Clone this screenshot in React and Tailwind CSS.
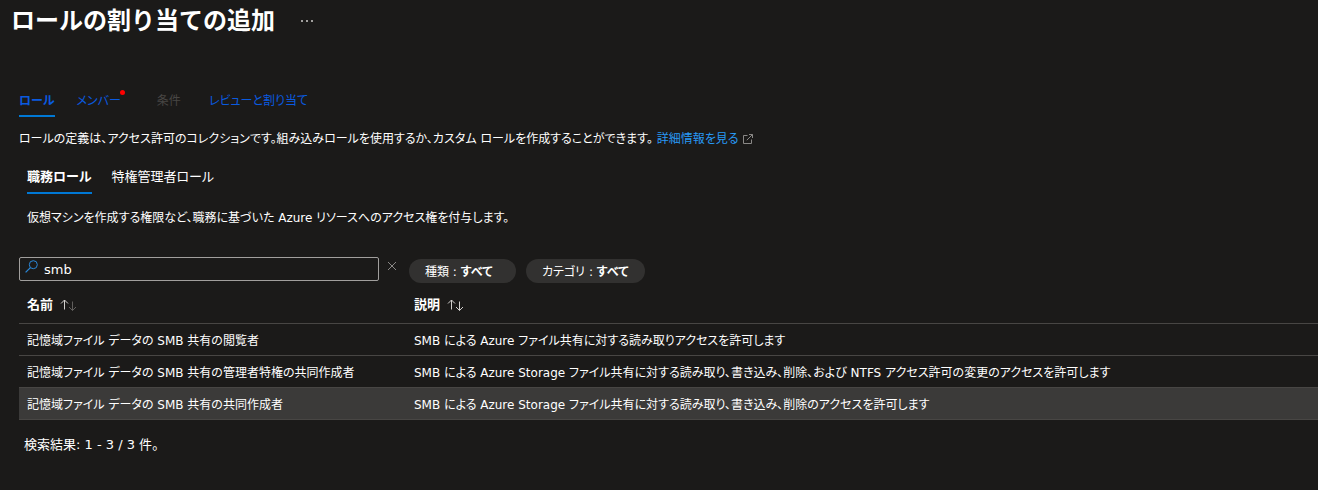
import React, { useState } from 'react';
import { clsx } from 'clsx';

const steps = [
  { label: 'ロール', active: true, className: 'mr-[22px]' },
  { label: 'メンバー', badge: true, className: 'mr-9' },
  { label: '条件', disabled: true, className: 'mr-7' },
  { label: 'レビューと割り当て' },
];

const filters = [
  { label: '種類', value: 'すべて', className: 'min-w-[107px]' },
  { label: 'カテゴリ', value: 'すべて', className: 'min-w-[119px]' },
];

const roles = [
  {
    name: '記憶域ファイル データの SMB 共有の閲覧者',
    description: 'SMB による Azure ファイル共有に対する読み取りアクセスを許可します',
  },
  {
    name: '記憶域ファイル データの SMB 共有の管理者特権の共同作成者',
    description:
      'SMB による Azure Storage ファイル共有に対する読み取り、書き込み、削除、および NTFS アクセス許可の変更のアクセスを許可します',
  },
  {
    name: '記憶域ファイル データの SMB 共有の共同作成者',
    description: 'SMB による Azure Storage ファイル共有に対する読み取り、書き込み、削除のアクセスを許可します',
    selected: true,
  },
];

const SearchIcon = () => (
  <svg className="w-[13px] h-[13px] shrink-0 mb-1.5" viewBox="0 0 13 13" fill="none" stroke="#2b88d8" aria-hidden="true">
    <circle cx="8.3" cy="4.7" r="4" />
    <path d="M5.4 7.6 L0.6 12.4" strokeWidth="1.3" />
  </svg>
);

const ExternalIcon = () => (
  <svg className="w-[10px] h-[10px]" viewBox="0 0 10 10" fill="none" stroke="#8a8886" aria-hidden="true">
    <path d="M4.5 1.5 H0.5 V9.5 H8.5 V5.5" />
    <path d="M6 0.5 H9.5 V4 M9.5 0.5 L3.8 6.2" />
  </svg>
);

const SortIcon = ({ sorted }) => (
  <svg className="w-4 h-3" viewBox="0 0 16 12" fill="none" aria-hidden="true">
    <path d="M4.5 10.5 V1 M1 4.5 L4.5 1 L8 4.5" stroke="#d2d0ce" />
    <path d="M12.5 2.5 V11.5 M9 8 L12.5 11.5 L16 8" stroke={sorted ? '#605e5c' : '#d2d0ce'} />
  </svg>
);

const StepTab = ({ label, active, badge, disabled, className }) => (
  <button
    role="tab"
    aria-selected={!!active}
    disabled={disabled}
    className={clsx(
      'relative h-[34px] pt-1 text-[12px] leading-7 border-b-2 whitespace-nowrap',
      active ? 'font-bold border-[#0078d4]' : 'border-transparent',
      disabled ? 'text-[#484644]' : 'text-[#0a5be0]',
      className
    )}
  >
    {label}
    {badge && <span className="absolute top-[7px] -right-1 w-[5px] h-[5px] rounded-full bg-[#ff0000]" />}
  </button>
);

const HeaderCell = ({ label, sorted, className }) => (
  <th className={clsx('px-2 text-left font-bold', className)} aria-sort={sorted ? 'ascending' : 'none'}>
    <button className="flex items-center gap-[7px]">
      {label}
      <SortIcon sorted={sorted} />
    </button>
  </th>
);

export default function App() {
  const [query, setQuery] = useState('smb');

  return (
    <main className="min-h-screen overflow-x-hidden bg-[#1b1a19] text-white text-[13px] leading-5 font-['DejaVu_Sans','Noto_Sans_CJK_JP',sans-serif] [font-feature-settings:'palt']">
      <header className="flex items-center gap-[26px] h-[42px] pl-[11px]">
        <h1 className="text-[24px] leading-8 font-bold [font-feature-settings:normal]">ロールの割り当ての追加</h1>
        <button aria-label="その他" className="flex gap-[3px]">
          <span className="w-[2px] h-[2px] bg-[#a19f9d]" />
          <span className="w-[2px] h-[2px] bg-[#a19f9d]" />
          <span className="w-[2px] h-[2px] bg-[#a19f9d]" />
        </button>
      </header>

      <div className="pl-[19px] pt-[41px]">
        <div role="tablist" className="flex">
          {steps.map((step) => (
            <StepTab key={step.label} {...step} />
          ))}
        </div>

        <p className="mt-3 text-[12px] leading-5 whitespace-nowrap">
          ロールの定義は、アクセス許可のコレクションです。組み込みロールを使用するか、カスタム ロールを作成することができます。
          <a href="#details" className="inline-flex items-center gap-1 ml-1 text-[#2899f5]">
            詳細情報を見る
            <ExternalIcon />
          </a>
        </p>

        <div role="tablist" className="flex gap-5 pl-2 mt-[11px]">
          <button role="tab" aria-selected="true" className="h-[34px] pt-0.5 leading-[30px] font-bold border-b-2 border-[#0078d4]">
            職務ロール
          </button>
          <button role="tab" aria-selected="false" className="h-[34px] pt-0.5 leading-[30px] border-b-2 border-transparent">
            特権管理者ロール
          </button>
        </div>
        <p className="pl-2 mt-[14px] text-[12px] leading-5">
          仮想マシンを作成する権限など、職務に基づいた Azure リソースへのアクセス権を付与します。
        </p>

        <div className="flex items-start mt-[29px]">
          <label className="flex items-center w-[360px] h-6 pl-[5px] gap-[6px] border border-[#a19f9d] rounded-[2px]">
            <SearchIcon />
            <input
              type="text"
              aria-label="検索"
              value={query}
              onChange={(e) => setQuery(e.target.value)}
              className="flex-1 min-w-0 pt-px bg-transparent outline-none"
            />
          </label>
          <button aria-label="クリア" onClick={() => setQuery('')} className="mt-1 ml-2 mr-3">
            <svg className="w-[10px] h-[10px]" viewBox="0 0 10 10" stroke="#8a8886" aria-hidden="true">
              <path d="M1 1 L9 9 M9 1 L1 9" />
            </svg>
          </button>
          <div className="flex gap-[10px] mt-[2px]">
            {filters.map((filter) => (
              <button
                key={filter.label}
                className={clsx('h-6 px-4 pt-px text-[12px] text-left whitespace-nowrap rounded-full bg-[#323130]', filter.className)}
              >
                {filter.label} : <span className="font-bold">{filter.value}</span>
              </button>
            ))}
          </div>
        </div>

        <table className="w-full mt-1 border-collapse whitespace-nowrap">
          <thead>
            <tr className="h-9 border-b border-[#484644]">
              <HeaderCell label="名前" sorted className="w-[387px]" />
              <HeaderCell label="説明" />
            </tr>
          </thead>
          <tbody className="text-[12px]">
            {roles.map((role) => (
              <tr key={role.name} className={clsx('h-8 border-b border-[#484644]', role.selected && 'bg-[#3b3a39]')}>
                <td className="px-2 pt-[3px]">{role.name}</td>
                <td className="px-2 pt-[3px]">{role.description}</td>
              </tr>
            ))}
          </tbody>
        </table>

        <p className="pl-[5px] mt-[15px]">検索結果: 1 - 3 / 3 件。</p>
      </div>
    </main>
  );
}
